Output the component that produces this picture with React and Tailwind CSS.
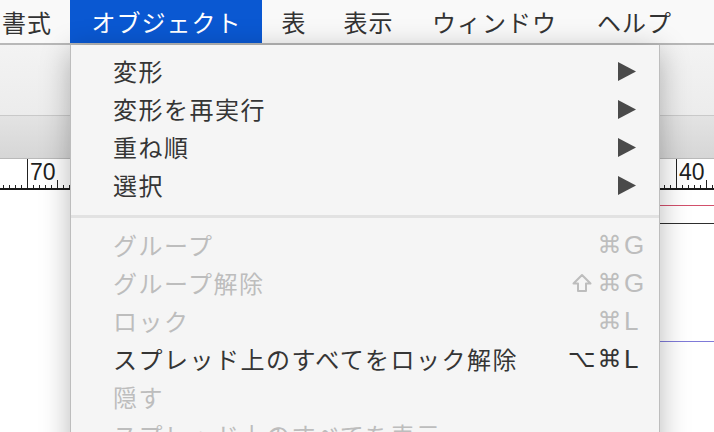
import React from "react";

const JP = "font-['Hiragino_Sans','Noto_Sans_CJK_JP','Noto_Sans',sans-serif]";

function Arrow() {
  return (
    <svg width="18" height="19" viewBox="0 0 18 19" className="shrink-0">
      <polygon points="0,0 18,9.5 0,19" fill="#4a4a4a" />
    </svg>
  );
}

function ShiftIcon({ color }) {
  return (
    <svg width="20" height="20" viewBox="0 0 20 20">
      <path d="M10 2 L18.5 10.5 L14 10.5 L14 18 L6 18 L6 10.5 L1.5 10.5 Z" fill="none" stroke={color} strokeWidth="2" strokeLinejoin="round" />
    </svg>
  );
}

function Shortcut({ mod, keyName, disabled }) {
  const c = disabled ? "text-[#bdbdbd]" : "text-[#333333]";
  const hex = disabled ? "#bdbdbd" : "#333333";
  return (
    <div className={`flex items-center shrink-0 ${c} font-['Liberation_Sans','DejaVu_Sans',sans-serif] text-[26px] leading-none`}>
      <span className="w-[31px] flex justify-center font-['DejaVu_Sans',sans-serif] text-[24px]">
        {mod === "⇧" ? <ShiftIcon color={hex} /> : mod || ""}
      </span>
      <span className="w-[25px] text-center font-['DejaVu_Sans',sans-serif] text-[24px]">⌘</span>
      <span className="w-[24px] text-left pl-[2px]">{keyName}</span>
    </div>
  );
}

function Item({ label, arrow, mod, keyName, disabled }) {
  return (
    <div className="h-[38px] flex items-center pl-[42px]">
      <span
        className={`flex-1 ${JP} text-[24px] tracking-[1.5px] leading-none whitespace-nowrap ${
          disabled ? "text-[#bdbdbd]" : "text-[#353535]"
        }`}
      >
        {label}
      </span>
      {arrow && (
        <div className="pr-[23px]">
          <Arrow />
        </div>
      )}
      {keyName && (
        <div className="pr-[13px]">
          <Shortcut mod={mod} keyName={keyName} disabled={disabled} />
        </div>
      )}
    </div>
  );
}

function Ruler() {
  const ticks = [];
  const addSet = (base, from, to, prefix) => {
    for (let k = from; k <= to; k++) {
      const x = base + 6 * k + 0.5;
      let y1 = 26;
      if (k === 0) y1 = 0;
      else if (k % 10 === 5 || k % 10 === -5) y1 = 21;
      ticks.push(<line key={prefix + k} x1={x} x2={x} y1={y1} y2={30} stroke="#222" strokeWidth="1" />);
    }
  };
  addSet(27, -5, 8, "a");
  addSet(676, -3, 7, "b");
  return (
    <svg width="714" height="31" className="block">
      <rect x="0" y="0" width="714" height="31" fill="#ffffff" />
      {ticks}
      <rect x="0" y="29" width="714" height="2" fill="#1a1a1a" />
      <text x="30" y="21" fontFamily="Liberation Sans, Arial, sans-serif" fontSize="23" fill="#1f1f1f">70</text>
      <text x="679" y="21" fontFamily="Liberation Sans, Arial, sans-serif" fontSize="23" fill="#1f1f1f">40</text>
    </svg>
  );
}

export default function App() {
  return (
    <div className="relative w-[714px] h-[432px] overflow-hidden bg-white flex flex-col">
      {/* menu bar */}
      <div className={`h-[45px] shrink-0 flex bg-[#f9f9f9] border-b-2 border-[#b8b8b8] ${JP} text-[24px] tracking-[1px] leading-none text-[#333333]`}>
        <div className="w-[70px] flex items-center pl-[2px]">書式</div>
        <div className="w-[192px] flex items-center justify-center bg-[#0a58d2] text-white pl-[1px]">オブジェクト</div>
        <div className="w-[63px] flex items-center justify-center pl-[1px]">表</div>
        <div className="w-[86px] flex items-center justify-center pl-[1px]">表示</div>
        <div className="w-[166px] flex items-center justify-center pl-[1px]">ウィンドウ</div>
        <div className="w-[114px] flex items-center justify-center pl-[1px]">ヘルプ</div>
      </div>
      {/* toolbar */}
      <div className="h-[71px] shrink-0 bg-gradient-to-b from-[#f3f3f3] to-[#ececec] border-b border-[#c9c9c9]" />
      <div className="h-[43px] shrink-0 bg-gradient-to-b from-[#e3e3e3] to-[#d6d6d6] border-b border-[#b9b9b9]" />
      <Ruler />
      {/* canvas */}
      <div className="flex-1 bg-white flex flex-col pl-[400px]">
        <div className="mt-[15px] h-px bg-[#d2506b]" />
        <div className="mt-[17px] h-px bg-[#2e2e2e]" />
        <div className="mt-[117px] h-px bg-[#7f7ad8]" />
      </div>

      {/* dropdown menu */}
      <div className="absolute left-[70px] top-[45px] w-[590px] h-[420px] bg-[#f5f5f5] border-l border-r border-[#bdbdbd] shadow-[0_6px_28px_rgba(0,0,0,0.28)] pt-[7px] flex flex-col">
        <Item label="変形" arrow />
        <Item label="変形を再実行" arrow />
        <Item label="重ね順" arrow />
        <Item label="選択" arrow />
        <div className="mt-[11px] mb-[8px] h-[3px] bg-[#e2e2e2]" />
        <Item label="グループ" keyName="G" disabled />
        <Item label="グループ解除" mod="⇧" keyName="G" disabled />
        <Item label="ロック" keyName="L" disabled />
        <Item label="スプレッド上のすべてをロック解除" mod="⌥" keyName="L" />
        <Item label="隠す" disabled />
        <Item label="スプレッド上のすべてを表示" disabled />
      </div>
    </div>
  );
}
